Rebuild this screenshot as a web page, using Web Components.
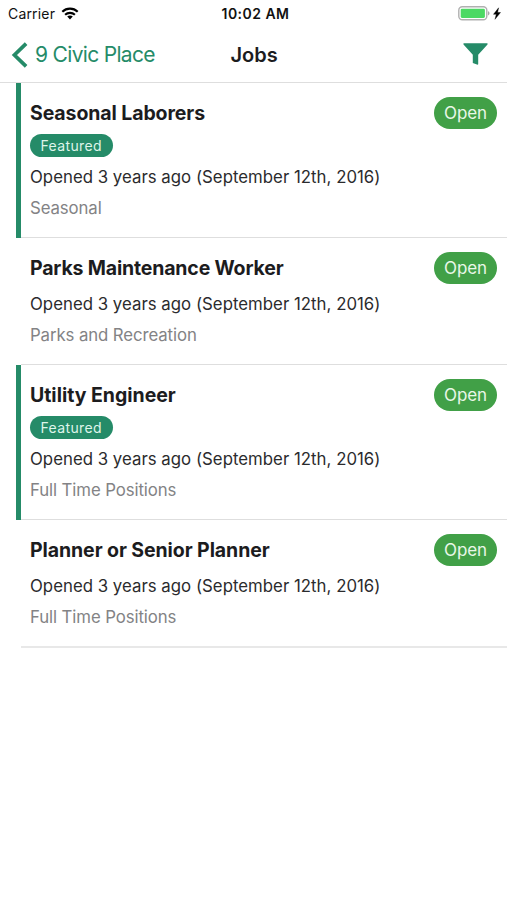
<!DOCTYPE html>
<html lang="en">
<head>
<meta charset="utf-8">
<title>Jobs</title>
<style>
html,body{margin:0;background:#fff}
body{font-family:Inter,"Liberation Sans",sans-serif;color:#1c1c1e}
</style>
</head>
<body>
<jobs-screen></jobs-screen>
<script>
const define = (name, html) => customElements.define(name, class extends HTMLElement {
  constructor() {
    super();
    this.attachShadow({ mode: 'open' }).innerHTML = html;
  }
});

define('status-bar', `
<style>
:host{display:grid;grid-template-columns:1fr auto 1fr;align-items:center;height:27px;padding:0 6px 0 8px;box-sizing:border-box;font-size:14px;line-height:17px;color:#111}
.left,.right{display:flex;align-items:center}
.left{letter-spacing:.17px;gap:6px}
.right{justify-content:flex-end;gap:3px}
.time{font-weight:600;letter-spacing:.46px;padding-left:2px}
svg{display:block}
</style>
<div class="left"><span>Carrier</span>
<svg width="18" height="13" viewBox="0 0 18 13" fill="none" stroke="#000" stroke-width="2.1"><path d="M1.3 4.8C5.6.6 12.4.6 16.7 4.8M4.1 7.8c2.8-2.6 7-2.6 9.8 0"/><path d="M9 12.4 6.2 9.6c1.6-1.4 4-1.4 5.6 0z" fill="#000" stroke="none"/></svg></div>
<span class="time">10:02 AM</span>
<div class="right">
<svg width="32" height="15" viewBox="0 0 32 15"><rect x=".8" y=".8" width="28" height="13" rx="3.5" fill="#fff" stroke="#b0b0b0" stroke-width="1.4"/><rect x="2.7" y="2.7" width="24.2" height="9.2" rx="1.3" fill="#4cd964"/><path d="M30 5.2c2 .6 2 3.6 0 4.200z" fill="#a8a8a8"/></svg>
<svg width="8" height="13" viewBox="0 0 8 13"><path d="M5.600.8.5 7.300h2.800L2 12.300 7.500 5.500H4.600z" fill="#000" stroke="#000" stroke-width=".4"/></svg>
</div>`);

define('nav-bar', `
<style>
:host{display:grid;grid-template-columns:1fr auto 1fr;align-items:center;height:56px;padding:0 19px 0 11px;box-sizing:border-box;border-bottom:1px solid #dedede;line-height:26px}
.back{display:flex;align-items:center;gap:7px;color:#258b68;font-size:21px;letter-spacing:-.68px;white-space:nowrap;width:0}
.back span{padding-top:1px}
.title{font-size:20px;font-weight:600;padding:1px 0 0 9px}
.filter{justify-self:end;margin-bottom:2px}
svg{display:block;flex:none}
</style>
<div class="back"><svg width="17" height="26" viewBox="0 0 17 26" fill="none" stroke="#258b68" stroke-width="3.700"><path d="M15.100 1.600 3.400 13l11.700 11.400"/></svg><span>9 Civic Place</span></div>
<div class="title">Jobs</div>
<svg class="filter" width="25" height="22" viewBox="0 0 25 22"><path d="M1 .3h23q1 0 .5 1.200L15.200 11.700V21.300l-.6.5-4.800-1.900V11.700L.5 1.500Q0 .3 1 .3z" fill="#258b68"/></svg>`);

define('status-pill', `
<style>
:host{display:flex;align-items:center;justify-content:center;width:63px;height:31.500px;border-radius:16px;background:#41a047;color:#e9f7e8;font-size:17px;letter-spacing:-.15px;flex:none}
</style><slot></slot>`);

define('feature-tag', `
<style>
:host{display:flex;align-items:center;justify-content:center;width:82.500px;height:23.500px;border-radius:12px;background:#258b68;color:#dff5ea;font-size:14px;letter-spacing:.36px}
</style><slot></slot>`);

define('job-row', `
<style>
:host{display:block;margin-left:15.500px;padding:14px 10px 0 14.500px;height:127px;box-sizing:border-box;
background:linear-gradient(#dedede,#dedede) 5px 100%/100% 1px no-repeat}
:host([featured]){height:155px;padding-left:9.500px;border-left:5px solid #258b68;background-position:0 100%}
:host(:last-child){height:128px;background-size:100% 2px;background-image:linear-gradient(#e8e8e8,#e8e8e8)}
.head{display:flex;justify-content:space-between;align-items:center;height:32px}
.name{font-size:19.500px;font-weight:650;letter-spacing:var(--track,-.1px)}
.tag{padding-top:4.500px;height:23.500px}
:host(:not([featured])) .tag{display:none}
.opened,.category{font-size:16.800px;line-height:30.500px;white-space:nowrap}
.opened{color:#2b2b2d;margin-top:5px;letter-spacing:.02px}
.category{color:#838385;letter-spacing:-.1px}
</style>
<div class="head"><span class="name"><slot name="title"></slot></span><status-pill>Open</status-pill></div>
<div class="tag"><feature-tag>Featured</feature-tag></div>
<div class="opened"><slot name="opened"></slot></div>
<div class="category"><slot></slot></div>`);

define('jobs-screen', `
<style>
:host{display:block;width:100%;min-height:900px;overflow:hidden;background:#fff}
</style>
<status-bar></status-bar>
<nav-bar></nav-bar>
<main>
<job-row featured><span slot="title">Seasonal Laborers</span><span slot="opened">Opened 3 years ago (September 12th, 2016)</span>Seasonal</job-row>
<job-row style="--track:-.17px"><span slot="title">Parks Maintenance Worker</span><span slot="opened">Opened 3 years ago (September 12th, 2016)</span>Parks and Recreation</job-row>
<job-row featured style="--track:-.02px"><span slot="title">Utility Engineer</span><span slot="opened">Opened 3 years ago (September 12th, 2016)</span>Full Time Positions</job-row>
<job-row style="--track:-.08px"><span slot="title">Planner or Senior Planner</span><span slot="opened">Opened 3 years ago (September 12th, 2016)</span>Full Time Positions</job-row>
</main>`);
</script>
</body>
</html>
